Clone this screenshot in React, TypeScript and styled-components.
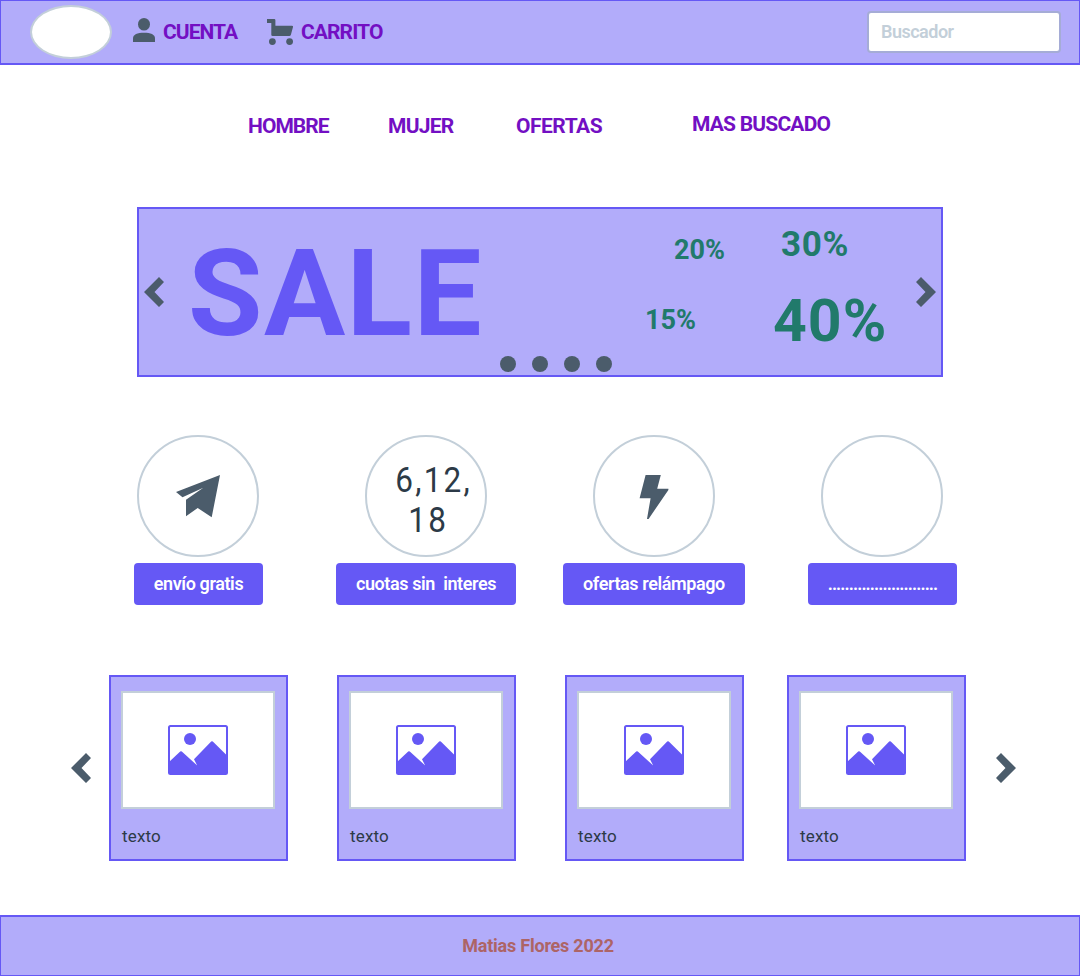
import React from "react";
import styled, { createGlobalStyle } from "styled-components";

const color = {
  lilac: "#b2acfa",
  indigo: "#6558f5",
  violet: "#730fc3",
  slate: "#4b5c6b",
  mist: "#c3cfd9",
  ink: "#2c3a47",
  green: "#217a6b",
  brick: "#ad6466",
};

const GlobalStyle = createGlobalStyle`
  *, *::before, *::after { box-sizing: border-box; }
  body {
    margin: 0;
    background: #fff;
    font-family: Roboto, "Liberation Sans", sans-serif;
  }
  svg { display: block; flex: none; }
`;

const Page = styled.div`
  width: 1080px;
  height: 976px;
  display: flex;
  flex-direction: column;
  overflow: hidden;
`;

const Header = styled.header`
  height: 65px;
  flex: none;
  display: flex;
  align-items: flex-start;
  padding: 0 18px 0 29px;
  background: ${color.lilac};
  border: 1px solid ${color.indigo};
  border-bottom-width: 2px;
`;

const Logo = styled.div`
  width: 82px;
  height: 54px;
  margin-top: 4px;
  border: 2px solid ${color.mist};
  border-radius: 50%;
  background: #fff;
`;

const HeaderLink = styled.a<{ $left: number; $top: number; $spacing: number }>`
  display: flex;
  align-items: flex-start;
  gap: 8px;
  height: 46px;
  margin-left: ${(p) => p.$left}px;
  padding-top: ${(p) => p.$top}px;
  width: 114px;
  color: ${color.violet};
  font-size: 21px;
  font-weight: 700;
  line-height: ${(p) => 63 - 2 * p.$top}px;
  letter-spacing: ${(p) => p.$spacing}px;
  white-space: nowrap;
`;

const Search = styled.input`
  width: 194px;
  height: 42px;
  margin: 10px 0 0 auto;
  padding: 0 12px 2px;
  border: 2px solid #a5acd6;
  border-radius: 4px;
  background: #fff;
  font: 600 18px Roboto, sans-serif;
  letter-spacing: -0.5px;
  outline: none;
  &::placeholder { color: ${color.mist}; opacity: 1; }
`;

const Nav = styled.nav`
  height: 142px;
  flex: none;
  display: flex;
  align-items: flex-start;
  padding: 50px 0 0 248px;
`;

const NavLink = styled.a<{ $width: number; $spacing: number; $raise?: boolean }>`
  width: ${(p) => p.$width}px;
  margin-top: ${(p) => (p.$raise ? -2 : 0)}px;
  color: ${color.violet};
  font-size: 21px;
  font-weight: 700;
  line-height: 22px;
  letter-spacing: ${(p) => p.$spacing}px;
  white-space: nowrap;
`;

const Hero = styled.section`
  position: relative;
  width: 806px;
  height: 170px;
  flex: none;
  align-self: center;
  display: flex;
  align-items: center;
  padding: 0 5px;
  border: 2px solid ${color.indigo};
  background: ${color.lilac};
`;

const HeroTitle = styled.h1`
  width: 301px;
  margin: 4px 0 0 24px;
  color: ${color.indigo};
  font-size: 121px;
  font-weight: 700;
  line-height: 162px;
  letter-spacing: 1.4px;
`;

const Offers = styled.div`
  width: 250px;
  height: 166px;
  margin-left: 151px;
  display: grid;
  grid-template-columns: 128px 1fr;
  grid-template-rows: 75px 72px;
  align-items: center;
`;

const Offer = styled.span<{ $size: number; $left: number; $top?: number; $spacing?: number }>`
  padding-left: ${(p) => p.$left}px;
  margin-top: ${(p) => p.$top ?? 0}px;
  color: ${color.green};
  font-size: ${(p) => p.$size}px;
  font-weight: 700;
  line-height: 1;
  letter-spacing: ${(p) => p.$spacing ?? 0}px;
`;

const HeroNext = styled.div`
  margin-left: auto;
`;

const Dots = styled.div`
  position: absolute;
  left: 361px;
  bottom: 3px;
  display: flex;
  gap: 16px;
`;

const Dot = styled.i`
  width: 16px;
  height: 16px;
  border-radius: 50%;
  background: ${color.slate};
`;

const Features = styled.section`
  width: 912px;
  flex: none;
  align-self: center;
  margin-top: 58px;
  display: grid;
  grid-template-columns: repeat(4, 228px);
`;

const Feature = styled.div`
  display: flex;
  flex-direction: column;
  align-items: center;
  gap: 6px;
`;

const Circle = styled.div`
  width: 122px;
  height: 122px;
  display: flex;
  flex-direction: column;
  align-items: center;
  justify-content: center;
  border: 2px solid ${color.mist};
  border-radius: 50%;
`;

const Quota = styled.span<{ $left: number; $top?: number }>`
  margin-left: ${(p) => p.$left}px;
  margin-top: ${(p) => p.$top ?? 0}px;
  color: ${color.ink};
  font-size: 35px;
  line-height: 40px;
  letter-spacing: 2.5px;
  transform: scaleX(0.9);
`;

const FeatureButton = styled.button<{ $width: number; $spacing: number }>`
  width: ${(p) => p.$width}px;
  height: 42px;
  margin: 0 0 0 ${(p) => p.$width % 2}px;
  padding: 0;
  border: 0;
  border-radius: 4px;
  background: ${color.indigo};
  color: #fff;
  font: 600 18px/42px Roboto, sans-serif;
  letter-spacing: ${(p) => p.$spacing}px;
  white-space: pre;
`;

const Products = styled.section`
  flex: none;
  display: flex;
  align-items: center;
  margin-top: 70px;
  padding-left: 71px;
`;

const Card = styled.article<{ $left: number }>`
  width: 179px;
  height: 186px;
  margin-left: ${(p) => p.$left}px;
  padding: 14px 10px 0;
  border: 2px solid ${color.indigo};
  background: ${color.lilac};
`;

const Thumb = styled.div`
  width: 154px;
  height: 118px;
  display: flex;
  align-items: center;
  justify-content: center;
  border: 2px solid ${color.mist};
  background: #fff;
`;

const CardText = styled.p`
  margin: 16px 0 0 1px;
  color: ${color.ink};
  font-size: 17px;
  line-height: 22px;
  letter-spacing: 0.15px;
`;

const ProductsNext = styled.div`
  margin-left: 30px;
`;

const Footer = styled.footer`
  height: 61px;
  flex: none;
  margin-top: 54px;
  padding-right: 4px;
  border: 1px solid ${color.indigo};
  border-top-width: 2px;
  background: ${color.lilac};
  color: ${color.brick};
  font-size: 18px;
  font-weight: 700;
  line-height: 57px;
  letter-spacing: -0.22px;
  text-align: center;
`;

const Chevron = ({ right }: { right?: boolean }) => (
  <svg width="20" height="30" viewBox="0 0 20 30" fill={color.slate}>
    <path
      d="M0 15 15 0 20 5 10.5 15 20 25 15 30Z"
      transform={right ? "translate(20 0) scale(-1 1)" : undefined}
    />
  </svg>
);

const PersonIcon = () => (
  <svg width="22" height="24" viewBox="0 0 22 24" fill={color.slate}>
    <ellipse cx="11" cy="6.3" rx="6" ry="6.3" />
    <path d="M0 24V20.3C0 16.6 4.4 14.8 11 14.8S22 16.6 22 20.3V24Z" />
  </svg>
);

const CartIcon = () => (
  <svg width="26" height="27" viewBox="0 0 26 27" fill={color.slate}>
    <path d="M0 0H7.3Q8.4 0 8.4 1.2V6.7H25Q26.3 6.8 26 8L23.9 15.7Q23.5 17 22.3 17H5.6Q4.3 17 4.3 15.7V4H0Z" />
    <circle cx="5.4" cy="22.6" r="3.4" />
    <circle cx="22.6" cy="22.6" r="3.4" />
  </svg>
);

const PlaneIcon = () => (
  <svg width="44" height="43" viewBox="0 0 44 43" fill={color.slate}>
    <path d="M44 0 0 17 6.5 22.3 27.3 12.7 10 24.7V41.3L21.7 33 35.7 42.3Z" />
  </svg>
);

const BoltIcon = () => (
  <svg width="30" height="46" viewBox="-0.6 -1.9 30 46" fill={color.slate}>
    <path d="M6 0H21.2L17.6 13.8H28.8V15L9 44H7.4L11 23.3H0Z" />
  </svg>
);

const PictureIcon = () => (
  <svg width="60" height="50" viewBox="0 0 60 50" fill={color.indigo}>
    <rect x="1" y="1" width="58" height="48" rx="1.5" fill="none" stroke={color.indigo} strokeWidth="2" />
    <circle cx="22" cy="14" r="6" />
    <path d="M1 37 12.2 26.5Q13 25.8 13.8 26.5L29.2 40.5 26 34.3 43.2 16.5Q44 15.8 44.8 16.5L59 30.5V49H1Z" />
  </svg>
);

const cardGaps = [18, 49, 49, 43];

export default function App() {
  return (
    <>
      <GlobalStyle />
      <Page>
        <Header>
          <Logo />
          <HeaderLink $left={21} $top={17} $spacing={-0.95}>
            <PersonIcon />
            CUENTA
          </HeaderLink>
          <HeaderLink $left={20} $top={18} $spacing={-0.9}>
            <CartIcon />
            CARRITO
          </HeaderLink>
          <Search placeholder="Buscador" />
        </Header>

        <Nav>
          <NavLink $width={140} $spacing={-0.95}>HOMBRE</NavLink>
          <NavLink $width={128} $spacing={-0.75}>MUJER</NavLink>
          <NavLink $width={176} $spacing={-0.5}>OFERTAS</NavLink>
          <NavLink $width={160} $spacing={-0.8} $raise>MAS BUSCADO</NavLink>
        </Nav>

        <Hero>
          <Chevron />
          <HeroTitle>SALE</HeroTitle>
          <Offers>
            <Offer $size={27} $left={34} $top={8}>20%</Offer>
            <Offer $size={35} $left={13} $top={-4} $spacing={0.7}>30%</Offer>
            <Offer $size={27} $left={5}>15%</Offer>
            <Offer $size={59} $left={5} $spacing={1}>40%</Offer>
          </Offers>
          <HeroNext>
            <Chevron right />
          </HeroNext>
          <Dots>
            <Dot />
            <Dot />
            <Dot />
            <Dot />
          </Dots>
        </Hero>

        <Features>
          <Feature>
            <Circle><PlaneIcon /></Circle>
            <FeatureButton $width={129} $spacing={-0.4}>envío gratis</FeatureButton>
          </Feature>
          <Feature>
            <Circle>
              <Quota $left={16} $top={9}>6,12,</Quota>
              <Quota $left={4}>18</Quota>
            </Circle>
            <FeatureButton $width={180} $spacing={-0.4}>{"cuotas sin  interes"}</FeatureButton>
          </Feature>
          <Feature>
            <Circle><BoltIcon /></Circle>
            <FeatureButton $width={182} $spacing={-0.4}>ofertas relámpago</FeatureButton>
          </Feature>
          <Feature>
            <Circle />
            <FeatureButton $width={149} $spacing={-0.9}>{".".repeat(26)}</FeatureButton>
          </Feature>
        </Features>

        <Products>
          <Chevron />
          {cardGaps.map((gap, i) => (
            <Card key={i} $left={gap}>
              <Thumb><PictureIcon /></Thumb>
              <CardText>texto</CardText>
            </Card>
          ))}
          <ProductsNext>
            <Chevron right />
          </ProductsNext>
        </Products>

        <Footer>Matias Flores 2022</Footer>
      </Page>
    </>
  );
}
